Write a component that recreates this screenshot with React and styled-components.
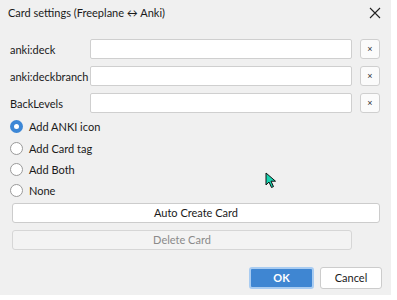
import React, { useState } from 'react';
import styled, { createGlobalStyle } from 'styled-components';

const GlobalStyle = createGlobalStyle`
  html, body {
    margin: 0;
    padding: 0;
    background: #ffffff;
  }
  body {
    font-family: Lato, "Noto Sans", sans-serif;
    font-size: 11px;
    color: #1a1a1a;
  }
`;

const Dialog = styled.div`
  position: relative;
  box-sizing: border-box;
  width: 391px;
  height: 295px;
  background: #f0f0f0;
  display: flex;
  flex-direction: column;
`;

const TitleBar = styled.div`
  display: flex;
  align-items: center;
  justify-content: space-between;
  height: 25px;
  padding: 0 8px 0 8px;
`;

const Title = styled.span`
  font-size: 11px;
  color: #1a1a1a;
`;

const CloseIcon = styled.svg`
  width: 12px;
  height: 12px;
  margin-right: 2px;
`;

const Body = styled.div`
  display: flex;
  flex-direction: column;
  padding: 14px 11px 0 10px;
`;

const FieldRow = styled.div`
  display: flex;
  align-items: center;
  height: 20px;
  margin-bottom: 7px;
`;

const Label = styled.label`
  width: 80px;
  font-size: 11px;
  white-space: nowrap;
`;

const Input = styled.input`
  box-sizing: border-box;
  width: 262px;
  height: 20px;
  border: 1px solid #cfcfcf;
  border-radius: 2px;
  background: #ffffff;
  outline: none;
`;

const ClearButton = styled.button`
  box-sizing: border-box;
  width: 20px;
  height: 20px;
  margin-left: 8px;
  border: 1px solid #cfcfcf;
  border-radius: 3px;
  background: #fbfbfb;
  padding: 0;
  display: flex;
  align-items: center;
  justify-content: center;
  color: #333;
  font-size: 9px;
  line-height: 1;
`;

const RadioGroup = styled.div`
  display: flex;
  flex-direction: column;
  margin-top: -4px;
`;

const RadioRow = styled.label`
  display: flex;
  align-items: center;
  height: 21.4px;
  font-size: 11px;
`;

const RadioDot = styled.span`
  box-sizing: border-box;
  width: 13px;
  height: 13px;
  border-radius: 50%;
  margin-right: 6px;
  border: ${p => (p.checked ? 'none' : '1px solid #9a9a9a')};
  background: ${p => (p.checked ? '#3c87d6' : '#ffffff')};
  display: flex;
  align-items: center;
  justify-content: center;
  &::after {
    content: '';
    display: ${p => (p.checked ? 'block' : 'none')};
    width: 5px;
    height: 5px;
    border-radius: 50%;
    background: #ffffff;
  }
`;

const WideButton = styled.button`
  box-sizing: border-box;
  width: ${p => p.w}px;
  height: 20px;
  margin-left: 2px;
  margin-top: ${p => p.mt}px;
  border: 1px solid ${p => (p.disabled ? '#d6d6d6' : '#cccccc')};
  border-radius: 3px;
  background: ${p => (p.disabled ? '#f3f3f3' : '#ffffff')};
  color: ${p => (p.disabled ? '#8a8a8a' : '#1a1a1a')};
  font-family: Lato, "Noto Sans", sans-serif;
  font-size: 11px;
  padding: 0;
`;

const Footer = styled.div`
  display: flex;
  justify-content: flex-end;
  gap: 6px;
  padding: 17px 9px 0 0;
`;

const DialogButton = styled.button`
  box-sizing: border-box;
  height: 22px;
  width: ${p => p.w}px;
  border-radius: 3px;
  font-family: Lato, "Noto Sans", sans-serif;
  font-size: 11px;
  padding: 0;
  border: ${p => (p.primary ? '2px solid #a9ccf1' : '1px solid #cccccc')};
  background: ${p => (p.primary ? '#3f86d2' : '#ffffff')};
  color: ${p => (p.primary ? '#ffffff' : '#1a1a1a')};
  font-weight: ${p => (p.primary ? 700 : 400)};
`;

const Cursor = styled.svg`
  position: absolute;
  left: 265px;
  top: 172px;
  width: 12px;
  height: 17px;
`;

const options = ['Add ANKI icon', 'Add Card tag', 'Add Both', 'None'];
const fields = ['anki:deck', 'anki:deckbranch', 'BackLevels'];

export default function App() {
  const [choice, setChoice] = useState(0);
  return (
    <>
      <GlobalStyle />
      <Dialog>
        <TitleBar>
          <Title>Card settings (Freeplane ↔ Anki)</Title>
          <CloseIcon viewBox="0 0 12 12">
            <path d="M1 1 L11 11 M11 1 L1 11" stroke="#222" strokeWidth="1.1" />
          </CloseIcon>
        </TitleBar>
        <Body>
          {fields.map(f => (
            <FieldRow key={f}>
              <Label>{f}</Label>
              <Input />
              <ClearButton>×</ClearButton>
            </FieldRow>
          ))}
          <RadioGroup>
            {options.map((o, i) => (
              <RadioRow key={o} onClick={() => setChoice(i)}>
                <RadioDot checked={choice === i} />
                {o}
              </RadioRow>
            ))}
          </RadioGroup>
          <WideButton w={368} mt={1}>Auto Create Card</WideButton>
          <WideButton w={340} mt={7} disabled>Delete Card</WideButton>
        </Body>
        <Footer>
          <DialogButton primary w={65}>OK</DialogButton>
          <DialogButton w={62}>Cancel</DialogButton>
        </Footer>
        <Cursor viewBox="0 0 12 17">
          <path d="M1 1 L1 13 L4 10 L6.5 15.5 L8.5 14.6 L6 9.2 L10.5 9.2 Z" fill="#19d3b0" stroke="#111" strokeWidth="1" strokeLinejoin="round" />
        </Cursor>
      </Dialog>
    </>
  );
}
